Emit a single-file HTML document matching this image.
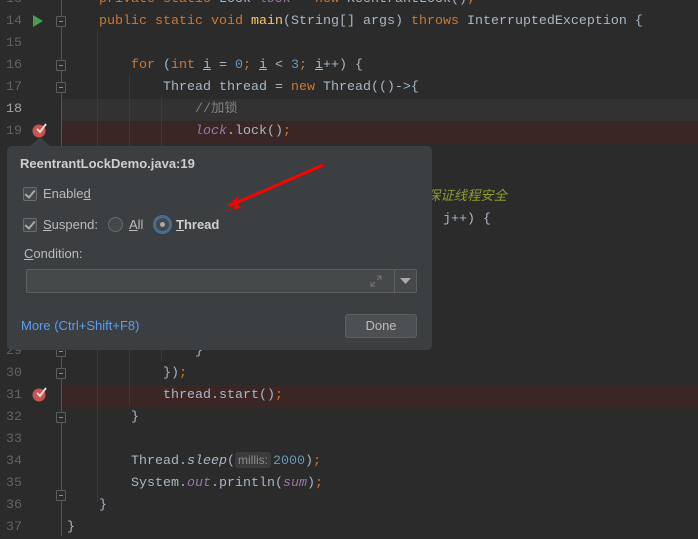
<!DOCTYPE html>
<html><head><meta charset="utf-8"><style>
*{margin:0;padding:0;box-sizing:border-box}
body{width:698px;height:536px;background:#2b2b2b;overflow:hidden;position:relative;font-family:"Liberation Mono","Noto Sans CJK SC",monospace;font-size:13.33px;color:#a9b7c6}
.ln{position:absolute;left:0;width:698px;height:22px;line-height:22px;white-space:pre}
.num{position:absolute;left:0;width:22px;text-align:right;color:#606366}
.code{position:absolute;left:67px}
.k{color:#cc7832}.n{color:#6897bb}.f{color:#ffc66d}.p{color:#9876aa;font-style:italic}.c{color:#808080}.cg{color:#8f9b2c;font-style:italic}
.it{font-style:italic}
.bp{position:absolute;left:62px;width:636px;height:22px;background:#3b2626}
.cur{position:absolute;left:62px;width:636px;height:22px;background:#323232}
.fold{position:absolute;left:56px;width:10px;height:11px;border:1px solid #5a5d5f;border-radius:1px;background:#2b2b2b}
.fold:after{content:"";position:absolute;left:2px;top:4px;width:4px;height:1px;background:#8a8d8f}
.guide{position:absolute;width:1px;background:#3a3a3a}
.pop{position:absolute;left:7px;top:146px;width:425px;height:204px;background:#3c3f41;border-radius:5px;font-family:"Liberation Sans","Noto Sans CJK SC",sans-serif;font-size:13px;color:#bbbbbb}
.cb{position:absolute;width:14px;height:14px;border:1px solid #6b6b6b;border-radius:2px;background:#43494a}
.cb:after{content:"";position:absolute;left:3px;top:0px;width:4px;height:8px;border:solid #aaa;border-width:0 2px 2px 0;transform:rotate(40deg)}
.t{position:absolute;white-space:nowrap}
</style></head><body>
<div class="guide" style="left:61px;top:0;height:536px;background:#555"></div>
<div class="cur" style="top:99px"></div>
<div class="bp" style="top:121px"></div>
<div class="bp" style="top:385px"></div>
<div class="guide" style="left:97px;top:31px;height:470px"></div>
<div class="guide" style="left:129px;top:75px;height:330px"></div>
<div class="guide" style="left:161px;top:97px;height:264px"></div>

<div class="ln" style="top:-11px"><span class="num">13</span><span class="code">    <span class="k">private static</span> Lock <span class="p">lock</span> = <span class="k">new</span> ReentrantLock()<span class="k">;</span></span></div>
<div class="ln" style="top:11px"><span class="num">14</span><span class="code">    <span class="k">public static void</span> <span class="f">main</span>(String[] args) <span class="k">throws</span> InterruptedException {</span></div>
<div class="ln" style="top:33px"><span class="num">15</span></div>
<div class="ln" style="top:55px"><span class="num">16</span><span class="code">        <span class="k">for</span> (<span class="k">int</span> <u>i</u> = <span class="n">0</span><span class="k">;</span> <u>i</u> &lt; <span class="n">3</span><span class="k">;</span> <u>i</u>++) {</span></div>
<div class="ln" style="top:77px"><span class="num">17</span><span class="code">            Thread thread = <span class="k">new</span> Thread(()-&gt;{</span></div>
<div class="ln" style="top:99px"><span class="num" style="color:#a4a3a3">18</span><span class="code">                <span class="c">//加锁</span></span></div>
<div class="ln" style="top:121px"><span class="num">19</span><span class="code">                <span class="p">lock</span>.lock()<span class="k">;</span></span></div>
<div class="ln" style="top:187px"><span class="code" style="left:419px"><span class="cg">.保证线程安全</span></span></div>
<div class="ln" style="top:209px"><span class="code" style="left:443px">j++) {</span></div>
<div class="ln" style="top:341px"><span class="num">29</span><span class="code">                }</span></div>
<div class="ln" style="top:363px"><span class="num">30</span><span class="code">            })<span class="k">;</span></span></div>
<div class="ln" style="top:385px"><span class="num">31</span><span class="code">            thread.start()<span class="k">;</span></span></div>
<div class="ln" style="top:407px"><span class="num">32</span><span class="code">        }</span></div>
<div class="ln" style="top:429px"><span class="num">33</span></div>
<div class="ln" style="top:451px"><span class="num">34</span><span class="code">        Thread.<span class="it">sleep</span>(<span style="display:inline-block;background:#3b3b3b;color:#8c8c8c;font-family:'Liberation Sans',sans-serif;font-size:12px;border-radius:3px;line-height:16px;padding:0 3px;margin-right:2px">millis:</span><span class="n">2000</span>)<span class="k">;</span></span></div>
<div class="ln" style="top:473px"><span class="num">35</span><span class="code">        System.<span class="p">out</span>.println(<span class="p">sum</span>)<span class="k">;</span></span></div>
<div class="ln" style="top:495px"><span class="num">36</span><span class="code">    }</span></div>
<div class="ln" style="top:517px"><span class="num">37</span><span class="code">}</span></div>

<div class="fold" style="top:16px"></div>
<div class="fold" style="top:60px"></div>
<div class="fold" style="top:82px"></div>
<div class="fold" style="top:346px"></div>
<div class="fold" style="top:368px"></div>
<div class="fold" style="top:412px"></div>
<div class="fold" style="top:490px"></div>
<svg style="position:absolute;left:33px;top:15px" width="10" height="12"><path d="M0 0 L10 6 L0 12Z" fill="#499c54"/></svg>
<svg style="position:absolute;left:31px;top:122px" width="18" height="16"><circle cx="8" cy="9" r="6.5" fill="#c75450"/><path d="M6 7 L9 10 L15 2" stroke="#ddd" stroke-width="2" fill="none"/></svg>
<svg style="position:absolute;left:31px;top:386px" width="18" height="16"><circle cx="8" cy="9" r="6.5" fill="#c75450"/><path d="M6 7 L9 10 L15 2" stroke="#ddd" stroke-width="2" fill="none"/></svg>

<svg style="position:absolute;left:28px;top:136px" width="24" height="12"><path d="M0 12 L12 1 L24 12Z" fill="#3c3f41"/></svg>
<div class="pop">
<div class="t" style="left:13px;top:10px;font-weight:bold;color:#cfcfcf">ReentrantLockDemo.java:19</div>
<div class="cb" style="left:16px;top:41px"></div>
<div class="t" style="left:36px;top:40px">Enable<u>d</u></div>
<div class="cb" style="left:16px;top:72px"></div>
<div class="t" style="left:36px;top:71px"><u>S</u>uspend:</div>
<div style="position:absolute;left:101px;top:71px;width:15px;height:15px;border:1px solid #6b6b6b;border-radius:50%;background:#43494a"></div>
<div class="t" style="left:122px;top:71px"><u>A</u>ll</div>
<div style="position:absolute;left:146px;top:69px;width:19px;height:19px;border:3px solid #466d94;border-radius:50%;background:#43494a"></div>
<div style="position:absolute;left:153px;top:76px;width:5px;height:5px;border-radius:50%;background:#aaa"></div>
<div class="t" style="left:169px;top:71px;font-weight:bold;color:#cfcfcf"><u>T</u>hread</div>
<div class="t" style="left:17px;top:100px"><u>C</u>ondition:</div>
<div style="position:absolute;left:19px;top:123px;width:391px;height:24px;border:1px solid #5e6060;border-radius:2px;background:#45494a"></div>
<div style="position:absolute;left:387px;top:124px;width:1px;height:22px;background:#5e6060"></div>
<svg style="position:absolute;left:363px;top:129px" width="12" height="12"><path d="M7 1h4v4M11 1L7 5M5 11H1V7M1 11L5 7" stroke="#777" fill="none"/></svg>
<svg style="position:absolute;left:393px;top:132px" width="12" height="7"><path d="M0 0h11L5.5 6Z" fill="#aaa"/></svg>
<div class="t" style="left:14px;top:172px;color:#589df6">More (Ctrl+Shift+F8)</div>
<div style="position:absolute;left:338px;top:168px;width:72px;height:24px;border:1px solid #5e6060;border-radius:3px;background:#4c5052;text-align:center;line-height:22px">Done</div>
</div>
<svg style="position:absolute;left:215px;top:162px" width="112" height="52"><path d="M108 3 L14 44" stroke="#f00" stroke-width="3"/><path d="M4 50 L24 34 L18 48Z M4 50 L26 46 L18 38Z" fill="#f00"/></svg>
</body></html>
